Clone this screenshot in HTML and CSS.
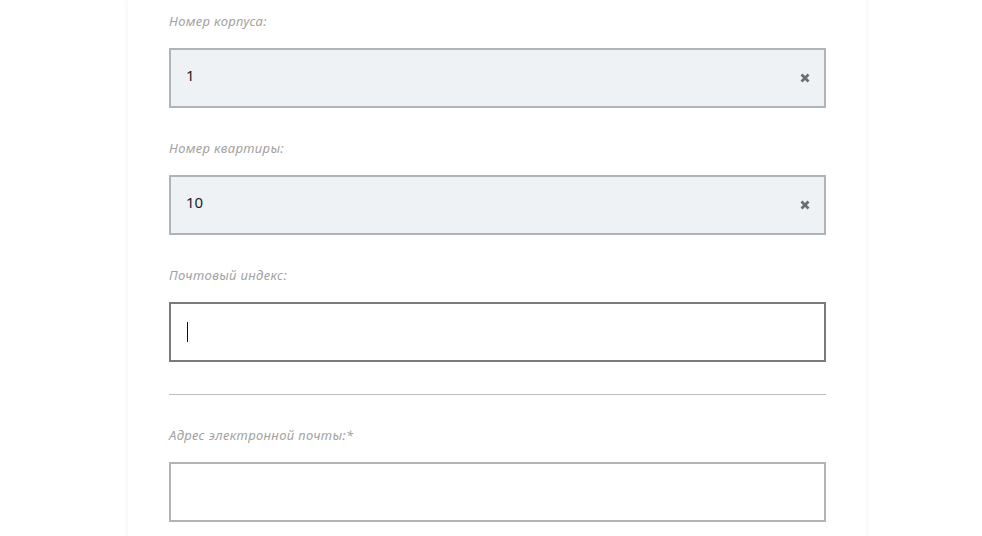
FILE: index.html
```html
<!DOCTYPE html>
<html lang="ru">
<head>
<meta charset="utf-8">
<link rel="stylesheet" href="styles.css">
</head>
<body>
<div class="card">
  <div class="field">
    <div class="label">Номер корпуса:</div>
    <div class="input filled"><span class="value">1</span><svg class="clear" viewBox="0 0 10 10" width="10" height="10"><path d="M1.5 1.5 L8.5 8.5 M8.5 1.5 L1.5 8.5"/></svg></div>
  </div>
  <div class="field">
    <div class="label">Номер квартиры:</div>
    <div class="input filled"><span class="value">10</span><svg class="clear" viewBox="0 0 10 10" width="10" height="10"><path d="M1.5 1.5 L8.5 8.5 M8.5 1.5 L1.5 8.5"/></svg></div>
  </div>
  <div class="field">
    <div class="label">Почтовый индекс:</div>
    <div class="input focused"><span class="caret"></span></div>
  </div>
  <hr class="divider">
  <div class="field">
    <div class="label">Адрес электронной почты:*</div>
    <div class="input"></div>
  </div>
</div>
</body>
</html>
```
FILE: styles.css
```css
html, body {
  margin: 0;
  padding: 0;
  background: #fff;
  height: 100%;
  overflow: hidden;
}
body {
  font-family: "Noto Sans", "Open Sans", sans-serif;
}
.card {
  width: 738px;
  margin-left: 128px;
  box-sizing: border-box;
  padding: 12px 40px 40px 41px;
  background: #fff;
  box-shadow: 0 0 6px rgba(0, 0, 0, 0.07);
  min-height: 600px;
}
.field {
  margin-bottom: 31px;
}
.label {
  font-style: italic;
  font-size: 13px;
  letter-spacing: 0.35px;
  line-height: 18px;
  color: #a2a2a2;
  margin-bottom: 18px;
}
.input {
  height: 60px;
  box-sizing: border-box;
  border: 2px solid #b3b3b3;
  background: #fff;
  display: flex;
  align-items: center;
  padding: 0 14px 0 15px;
}
.input.filled {
  background: #eef2f5;
  border-color: #b0b4b7;
}
.input.focused {
  border-color: #7b7b7b;
}
.value {
  flex: 1;
  font-size: 15px;
  color: #222;
  padding-bottom: 6px;
}
.clear {
  display: block;
  stroke: #6d6d6d;
  stroke-width: 2.8;
  stroke-linecap: butt;
  fill: none;
}
.caret {
  display: block;
  width: 1px;
  height: 20px;
  background: #111;
  margin-left: 1px;
}
.divider {
  border: 0;
  border-top: 1px solid #bdbdbd;
  margin: 32px 0 31px 0;
}
.field:has(+ .divider) {
  margin-bottom: 0;
}
```
